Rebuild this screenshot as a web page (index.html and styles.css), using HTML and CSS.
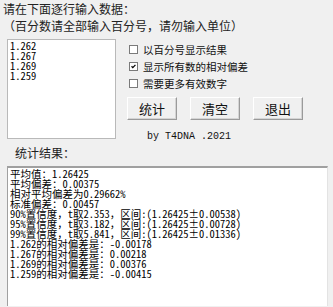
FILE: index.html
```html
<!DOCTYPE html>
<html lang="zh-CN">
<head>
 <meta charset="UTF-8">
 <title>统计</title>
 <link rel="stylesheet" href="styles.css">
</head>
<body>
<div class="intro">
 <p class="intro-line">请在下面逐行输入数据：</p>
 <p class="intro-line">（百分数请全部输入百分号，请勿输入单位）</p>
</div>
<div class="input-row">
 <div class="data-box">1.262
1.267
1.269
1.259</div>
 <div class="options">
  <label class="check-row"><span class="check"></span>以百分号显示结果</label>
  <label class="check-row"><span class="check checked"><svg viewBox="0 0 9 9" width="9" height="9"><path d="M2 4.2 L3.6 6 L7 2.4" fill="none" stroke="#000" stroke-width="1.6"/></svg></span>显示所有数的相对偏差</label>
  <label class="check-row"><span class="check"></span>需要更多有效数字</label>
  <div class="button_wrap">
   <button type="button" class="win-btn">统计</button>
   <button type="button" class="win-btn">清空</button>
   <button type="button" class="win-btn">退出</button>
  </div>
  <p class="credit">by T4DNA .2021</p>
 </div>
</div>
<p class="result-label">统计结果：</p>
<div class="result-box">平均值：1.26425
平均偏差：0.00375
相对平均偏差为0.29662%
标准偏差：0.00457
90%置信度，t取2.353，区间:(1.26425±0.00538)
95%置信度，t取3.182，区间:(1.26425±0.00728)
99%置信度，t取5.841，区间:(1.26425±0.01336)
1.262的相对偏差是：-0.00178
1.267的相对偏差是：0.00218
1.269的相对偏差是：0.00376
1.259的相对偏差是：-0.00415</div>
</body>
</html>
```

FILE: styles.css
```css
html, body {
 height: 307px;
 overflow: hidden;
 }
body {
 margin: 0;
 background-color: #f0f0f0;
 font-family: "Noto Sans CJK SC", "Liberation Sans", sans-serif;
 color: #000;
 }
.intro {
 padding: 0 0 0 3px;
 }
.intro-line {
 margin: 0;
 font-size: 12px;
 line-height: 17px;
 color: #222;
 }
.input-row {
 display: flex;
 margin-top: 5px;
 padding-left: 7px;
 }
.data-box {
 width: 105px;
 height: 97px;
 background-color: #fff;
 border: 1px solid #b9b9b9;
 padding: 1px 0 0 2px;
 white-space: pre;
 font-family: "Noto Sans Mono CJK SC", "Liberation Mono", monospace;
 font-size: 10.5px;
 line-height: 10px;
 }
.options {
 display: flex;
 flex-direction: column;
 align-items: flex-start;
 padding: 2px 0 0 11px;
 }
.check-row {
 display: flex;
 align-items: center;
 height: 17px;
 padding-left: 2px;
 font-size: 10.5px;
 color: #111;
 }
.check {
 width: 7px;
 height: 7px;
 border: 1px solid #7a7a7a;
 background-color: #fff;
 margin-right: 5px;
 display: flex;
 align-items: center;
 justify-content: center;
 }
.check svg {
 width: 7px;
 height: 7px;
 }
.button_wrap {
 display: flex;
 gap: 13px;
 margin-top: 5px;
 }
.win-btn {
 width: 50px;
 height: 23px;
 padding: 0;
 font-family: "Noto Sans CJK SC", sans-serif;
 font-size: 13px;
 color: #111;
 background-color: #f0f0f0;
 border-style: solid;
 border-width: 1px;
 border-color: #fff #9a9a9a #9a9a9a #fff;
 box-shadow: inset -1px -1px 0 #d4d4d4;
 }
.credit {
 margin: 11px 0 0 20px;
 font-family: "Liberation Mono", monospace;
 font-size: 10px;
 line-height: 12px;
 color: #111;
 }
.result-label {
 margin: 2px 0 0 15px;
 font-size: 12px;
 line-height: 16px;
 color: #222;
 }
.result-box {
 margin: 5px 5px 0 7px;
 height: 137px;
 background-color: #fff;
 border-top: 2px solid #a0a0a0;
 border-left: 1px solid #a0a0a0;
 border-right: 1px solid #e3e3e3;
 padding: 1px 0 0 2px;
 white-space: pre;
 font-family: "Noto Sans Mono CJK SC", "Liberation Mono", monospace;
 font-size: 10.5px;
 line-height: 10px;
 }
```
